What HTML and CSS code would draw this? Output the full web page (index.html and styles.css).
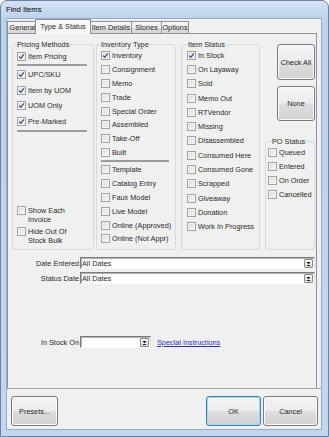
FILE: index.html
```html
<!DOCTYPE html>
<html lang="en">
<head>
  <meta charset="UTF-8">
  <meta name="viewport" content="width=device-width, initial-scale=1.0">
  <title>Find Items</title>
  <link rel="stylesheet" href="styles.css">
</head>
<body>
<div class="window">
  <div class="titlebar">Find Items</div>
  <div class="client">
    <!-- Linguette -->
    <div class="tabs">
      <div class="tab tab-general">General</div>
      <div class="tab tab-type active">Type &amp; Status</div>
      <div class="tab tab-details">Item Details</div>
      <div class="tab tab-stones">Stones</div>
      <div class="tab tab-options">Options</div>
    </div>

    <div class="panel">
      <div class="groups">
        <!-- Pricing Methods -->
        <fieldset class="group pricing">
          <legend>Pricing Methods</legend>
          <label class="cb"><span class="box"><svg viewBox="0 0 7 7"><path d="M1 3.6 L2.8 5.4 L6 1.4"/></svg></span>Item Pricing</label>
          <div class="sep"></div>
          <label class="cb tall"><span class="box"><svg viewBox="0 0 7 7"><path d="M1 3.6 L2.8 5.4 L6 1.4"/></svg></span>UPC/SKU</label>
          <label class="cb tall"><span class="box"><svg viewBox="0 0 7 7"><path d="M1 3.6 L2.8 5.4 L6 1.4"/></svg></span>Item by UOM</label>
          <label class="cb tall"><span class="box"><svg viewBox="0 0 7 7"><path d="M1 3.6 L2.8 5.4 L6 1.4"/></svg></span>UOM Only</label>
          <label class="cb tall"><span class="box"><svg viewBox="0 0 7 7"><path d="M1 3.6 L2.8 5.4 L6 1.4"/></svg></span>Pre-Marked</label>
          <div class="sep"></div>
          <label class="cb multi show-each"><span class="box"></span><span>Show Each<br>Invoice</span></label>
          <label class="cb multi hide-out"><span class="box"></span><span>Hide Out Of<br>Stock Bulk</span></label>
        </fieldset>

        <!-- Inventory Type -->
        <fieldset class="group inventory">
          <legend>Inventory Type</legend>
          <label class="cb"><span class="box"><svg viewBox="0 0 7 7"><path d="M1 3.6 L2.8 5.4 L6 1.4"/></svg></span>Inventory</label>
          <label class="cb"><span class="box"></span>Consignment</label>
          <label class="cb"><span class="box"></span>Memo</label>
          <label class="cb"><span class="box"></span>Trade</label>
          <label class="cb"><span class="box"></span>Special Order</label>
          <label class="cb"><span class="box"></span>Assembled</label>
          <label class="cb"><span class="box"></span>Take-Off</label>
          <label class="cb"><span class="box"></span>Built</label>
          <div class="sep"></div>
          <label class="cb"><span class="box"></span>Template</label>
          <label class="cb"><span class="box"></span>Catalog Entry</label>
          <label class="cb"><span class="box"></span>Faux Model</label>
          <label class="cb"><span class="box"></span>Live Model</label>
          <label class="cb"><span class="box"></span>Online (Approved)</label>
          <label class="cb"><span class="box"></span>Online (Not Appr)</label>
        </fieldset>

        <!-- Item Status -->
        <fieldset class="group status">
          <legend>Item Status</legend>
          <label class="cb"><span class="box"><svg viewBox="0 0 7 7"><path d="M1 3.6 L2.8 5.4 L6 1.4"/></svg></span>In Stock</label>
          <label class="cb"><span class="box"></span>On Layaway</label>
          <label class="cb"><span class="box"></span>Sold</label>
          <label class="cb"><span class="box"></span>Memo Out</label>
          <label class="cb"><span class="box"></span>RTVendor</label>
          <label class="cb"><span class="box"></span>Missing</label>
          <label class="cb"><span class="box"></span>Disassembled</label>
          <label class="cb"><span class="box"></span>Consumed Here</label>
          <label class="cb"><span class="box"></span>Consumed Gone</label>
          <label class="cb"><span class="box"></span>Scrapped</label>
          <label class="cb"><span class="box"></span>Giveaway</label>
          <label class="cb"><span class="box"></span>Donation</label>
          <label class="cb"><span class="box"></span>Work In Progress</label>
        </fieldset>

        <!-- Pulsanti e PO Status -->
        <div class="side">
          <button class="btn check-all">Check All</button>
          <button class="btn none">None</button>
          <fieldset class="group po">
            <legend>PO Status</legend>
            <label class="cb"><span class="box"></span>Queued</label>
            <label class="cb"><span class="box"></span>Entered</label>
            <label class="cb"><span class="box"></span>On Order</label>
            <label class="cb"><span class="box"></span>Cancelled</label>
          </fieldset>
        </div>
      </div>

      <div class="field date-entered">
        <span class="field-label">Date Entered</span>
        <div class="combo">All Dates<span class="drop"><svg viewBox="0 0 7 7"><path d="M1.5 2 H5.5 L3.5 4.3 Z"/><rect x="1.8" y="5" width="3.4" height="0.9"/></svg></span></div>
      </div>
      <div class="field status-date">
        <span class="field-label">Status Date</span>
        <div class="combo">All Dates<span class="drop"><svg viewBox="0 0 7 7"><path d="M1.5 2 H5.5 L3.5 4.3 Z"/><rect x="1.8" y="5" width="3.4" height="0.9"/></svg></span></div>
      </div>
      <div class="field in-stock">
        <span class="field-label">In Stock On</span>
        <div class="combo short"><span class="drop"><svg viewBox="0 0 7 7"><path d="M1.5 2 H5.5 L3.5 4.3 Z"/><rect x="1.8" y="5" width="3.4" height="0.9"/></svg></span></div>
        <a class="link" href="#">Special Instructions</a>
      </div>
    </div>

    <div class="footer">
      <button class="btn presets">Presets...</button>
      <button class="btn ok">OK</button>
      <button class="btn cancel">Cancel</button>
    </div>
  </div>
</div>
</body>
</html>
```

FILE: styles.css
```css
* {
  box-sizing: border-box;
}
body {
  margin: 0;
  font-family: "Liberation Sans", Arial, sans-serif;
  font-size: 7.3px;
  color: #2a2a2a;
}
/* Finestra */
.window {
  width: 329px;
  height: 437px;
  border: 1px solid #6b83a0;
  border-radius: 7px 7px 0 0;
  background: linear-gradient(#d3e2f3, #bcd3ec 18px, #c2d7ed);
  padding: 0 6px 6px 5px;
  display: flex;
  flex-direction: column;
}
.titlebar {
  height: 17px;
  line-height: 18px;
  font-size: 7.6px;
  color: #000;
}
.client {
  flex: 1;
  display: flex;
  flex-direction: column;
  background: #f0f0f0;
  border: 1px solid #97abc4;
}
/* Linguette */
.tabs {
  display: flex;
  align-items: flex-end;
  height: 14px;
}
.tab {
  height: 12px;
  line-height: 11px;
  text-align: center;
  white-space: nowrap;
  border: 1px solid #8f929a;
  border-bottom: none;
  background: linear-gradient(#f6f6f6, #ebebeb 50%, #dedede 51%, #d6d6d6);
  margin-right: -1px;
}
.tab-general { width: 31px; }
.tab-details { width: 42px; }
.tab-stones { width: 31px; }
.tab-options { width: 28px; }
.tab.active {
  position: relative;
  z-index: 1;
  width: 56px;
  height: 15px;
  line-height: 13px;
  margin: 0 -1px -1px -2px;
  background: #f8f8f8;
}
.panel {
  flex: 1;
  width: 310px;
  border: 1px solid #8f929a;
  border-bottom: none;
  padding: 6px 0 0 4px;
  display: flex;
  flex-direction: column;
}
/* Gruppi */
.groups {
  display: flex;
  height: 210px;
}
.group {
  margin: 0;
  padding: 0 4px;
  min-width: 0;
  border: 1px solid #d5dbe0;
  border-radius: 3px;
}
.group legend {
  padding: 0;
  line-height: 9px;
}
.pricing {
  width: 82px;
  margin-right: 2px;
}
.inventory {
  width: 80px;
  margin-right: 5px;
}
.status {
  width: 79px;
  padding-left: 5px;
}
.status legend {
  margin-left: 1px;
}
.side {
  width: 50px;
  margin-left: 5px;
  display: flex;
  flex-direction: column;
}
.po {
  height: 113px;
  margin-top: 16px;
  padding: 0 2px;
}
.po legend {
  margin-left: 4px;
}
/* Caselle di controllo */
.cb {
  display: flex;
  align-items: center;
  height: 14px;
  white-space: nowrap;
}
.cb.tall {
  height: 15.5px;
}
.inventory .cb {
  height: 13.8px;
}
.status .cb {
  height: 14.3px;
}
.status .cb:first-of-type,
.po .cb:first-of-type {
  margin-top: -1px;
}
.box {
  flex: none;
  width: 9px;
  height: 9px;
  margin-right: 2px;
  border: 1px solid #a2a3a3;
  background: linear-gradient(135deg, #dadada, #f8f8f8);
  box-shadow: inset 0 0 0 1px #f4f4f4;
}
.box svg {
  display: block;
  width: 7px;
  height: 7px;
  fill: none;
  stroke: #34508f;
  stroke-width: 1.3;
}
.cb.multi {
  height: auto;
  align-items: flex-start;
  line-height: 9px;
  white-space: normal;
}
.show-each {
  margin-top: 74px;
}
.hide-out {
  margin-top: 3px;
}
.sep {
  height: 2px;
  background: #9c9c9c;
  margin: 1px 2px 1px 0;
}
.inventory .sep {
  margin: 0.6px 2px 1px 0;
}
/* Pulsanti */
.btn {
  font: inherit;
  color: #2a2a2a;
  padding: 0;
  border: 1px solid #7a7a7a;
  border-radius: 3px;
  background: linear-gradient(#f4f4f4, #ececec 48%, #dddddd 52%, #d2d2d2);
  box-shadow: inset 0 0 0 1px #fbfbfb;
}
.check-all {
  width: 38px;
  height: 36px;
  margin: 4px 0 0 12px;
}
.none {
  width: 38px;
  height: 35px;
  margin: 6px 0 0 12px;
}
/* Campi data */
.field {
  display: flex;
  align-items: center;
  height: 12px;
  margin-right: 1px;
}
.field-label {
  width: 68px;
  padding-right: 1px;
  text-align: right;
}
.combo {
  flex: 1;
  height: 12px;
  display: flex;
  align-items: center;
  padding-left: 1px;
  background: #fff;
  border: 1px solid;
  border-color: #7a7a7a #e0e0e0 #fafafa #7a7a7a;
  box-shadow: inset 1px 1px 0 #b4b4b4;
}
.combo.short {
  flex: none;
  width: 71px;
}
.drop {
  margin-left: auto;
  margin-right: 1px;
  width: 9px;
  height: 9px;
  border: 1px solid #8a8a8a;
  border-radius: 1px;
  background: linear-gradient(#fafafa, #dcdcdc);
}
.drop svg {
  display: block;
  width: 7px;
  height: 7px;
  fill: #111;
}
.date-entered {
  margin-top: 7px;
}
.status-date {
  margin-top: 3px;
}
.in-stock {
  margin-top: 52px;
}
.link {
  margin-left: 6px;
  color: #2233dd;
  text-decoration: underline;
}
/* Barra inferiore */
.footer {
  height: 41px;
  flex: none;
  border-top: 1px solid #a7a7a7;
  padding: 7px 3px 0 4px;
  display: flex;
  align-items: flex-start;
  gap: 2px;
}
.footer .btn {
  height: 30px;
}
.presets {
  width: 47px;
  margin-right: auto;
}
.ok,
.cancel {
  width: 55px;
}
.ok {
  border-color: #3c7fb1;
  box-shadow: inset 0 0 0 1px #9fdcf6;
}
```
